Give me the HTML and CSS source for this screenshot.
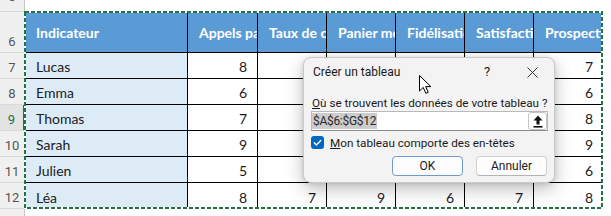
FILE: index.html
```html
<!DOCTYPE html>
<html lang="fr">
<head>
<meta charset="utf-8">
<title>Créer un tableau</title>
<link rel="stylesheet" href="styles.css">
</head>
<body>
<div class="sheet">
  <div class="grid">
    <div class="rh r5"><span>5</span></div>
    <div class="blank"></div><div class="blank"></div><div class="blank"></div><div class="blank"></div><div class="blank"></div><div class="blank"></div><div class="blank"></div>

    <div class="rh"><span>6</span></div>
    <div class="hd">Indicateur</div>
    <div class="hd">Appels par jour</div>
    <div class="hd">Taux de conversion</div>
    <div class="hd">Panier moyen</div>
    <div class="hd">Fidélisation</div>
    <div class="hd">Satisfaction</div>
    <div class="hd last">Prospection</div>

    <div class="rh"><span>7</span></div>
    <div class="nm">Lucas</div><div class="num">8</div><div class="num"></div><div class="num"></div><div class="num"></div><div class="num"></div><div class="num last">7</div>

    <div class="rh"><span>8</span></div>
    <div class="nm">Emma</div><div class="num">6</div><div class="num"></div><div class="num"></div><div class="num"></div><div class="num"></div><div class="num last">6</div>

    <div class="rh active"><span>9</span></div>
    <div class="nm">Thomas</div><div class="num">7</div><div class="num"></div><div class="num"></div><div class="num"></div><div class="num"></div><div class="num last">8</div>

    <div class="rh"><span>10</span></div>
    <div class="nm">Sarah</div><div class="num">9</div><div class="num"></div><div class="num"></div><div class="num"></div><div class="num"></div><div class="num last">9</div>

    <div class="rh"><span>11</span></div>
    <div class="nm">Julien</div><div class="num">5</div><div class="num"></div><div class="num"></div><div class="num"></div><div class="num"></div><div class="num last">6</div>

    <div class="rh"><span>12</span></div>
    <div class="nm bottom">Léa</div><div class="num bottom">8</div><div class="num bottom">7</div><div class="num bottom">9</div><div class="num bottom">6</div><div class="num bottom">7</div><div class="num bottom last">8</div>

    <div class="rh r13"></div>
    <div class="blank"></div><div class="blank"></div><div class="blank"></div><div class="blank"></div><div class="blank"></div><div class="blank"></div><div class="blank"></div>
  </div>

  <svg class="ants" width="611" height="216" viewBox="0 0 611 216">
    <rect x="25" y="12" width="577" height="196" fill="none" stroke="#ffffff" stroke-width="2"/>
    <rect x="25" y="12" width="577" height="196" fill="none" stroke="#217346" stroke-width="2" stroke-dasharray="4 2"/>
  </svg>

  <div class="dialog">
    <div class="titlebar">
      <span class="title">Créer un tableau</span>
      <span class="help">?</span>
      <span class="close">
        <svg width="11" height="11" viewBox="0 0 11 11"><path d="M0.5 0.5 L10.5 10.5 M10.5 0.5 L0.5 10.5" stroke="#333" stroke-width="1" fill="none"/></svg>
      </span>
    </div>
    <div class="label"><u>O</u>ù se trouvent les données de votre tableau ?</div>
    <div class="input">
      <span class="sel">$A$6:$G$12</span>
      <span class="collapse">
        <svg width="10" height="13" viewBox="0 0 10 13"><path d="M5 0.5 L9.5 5.5 L6.5 5.5 L6.5 9.5 L3.5 9.5 L3.5 5.5 L0.5 5.5 Z" fill="#111"/><rect x="0.5" y="11" width="9" height="1.6" fill="#111"/></svg>
      </span>
    </div>
    <div class="check">
      <span class="box">
        <svg width="13" height="13" viewBox="0 0 13 13"><path d="M3.2 6.8 L5.4 9 L9.8 4.4" stroke="#fff" stroke-width="1.4" fill="none" stroke-linecap="round" stroke-linejoin="round"/></svg>
      </span>
      <span class="checklabel"><u>M</u>on tableau comporte des en-têtes</span>
    </div>
    <div class="buttons">
      <span class="btn ok">OK</span>
      <span class="btn">Annuler</span>
    </div>
  </div>

  <svg class="cursor" width="14" height="20" viewBox="0 0 14 20">
    <path d="M0.5 0.5 L0.5 16 L4.2 12.4 L6.8 18.3 L9.2 17.3 L6.7 11.6 L11.8 11.6 Z" fill="#fff" stroke="#000" stroke-width="1" stroke-linejoin="round"/>
  </svg>
</div>
</body>
</html>
```

FILE: styles.css
```css
html, body {
  margin: 0;
  padding: 0;
  background: #ffffff;
}

.sheet {
  position: relative;
  width: 611px;
  height: 216px;
  overflow: hidden;
}

.grid {
  display: grid;
  grid-template-columns: 25px 163px 70px 69px 69px 69px 69px 77px;
  grid-template-rows: 12px 41px repeat(6, 26px) 7px;
  font-family: Lato, "Liberation Sans", sans-serif;
  font-size: 14px;
  color: #1b1b1b;
}

.grid > div {
  box-sizing: border-box;
  min-width: 0;
  overflow: hidden;
  white-space: nowrap;
}

.rh {
  background: #f0f0f0;
  border-right: 1px solid #c6c6c6;
  border-bottom: 1px solid #dadada;
  display: flex;
  align-items: flex-end;
  justify-content: center;
  font-family: Roboto, "Noto Sans", sans-serif;
  font-size: 13px;
  line-height: 13px;
  color: #555;
  padding-bottom: 4px;
}

.rh.r5 {
  padding-bottom: 8px;
  align-items: flex-end;
}

.rh.r13 {
  border-bottom: none;
}

.rh.active {
  color: #217346;
  background: #e3e3e3;
  border-right: 2px solid #217346;
}

.blank {
  background: #ffffff;
}

.hd {
  background: #5b9bd5;
  color: #ffffff;
  font-weight: 700;
  display: flex;
  align-items: center;
  padding-left: 11px;
  border-right: 1px solid #000;
  border-bottom: 1px solid #000;
}

.nm {
  background: #ddebf7;
  display: flex;
  align-items: flex-end;
  padding-left: 11px;
  padding-bottom: 3px;
  line-height: 16px;
  border-right: 1px solid #000;
  border-bottom: 1px solid #000;
}

.num {
  background: #ffffff;
  display: flex;
  align-items: flex-end;
  justify-content: flex-end;
  padding-right: 10px;
  padding-bottom: 3px;
  line-height: 16px;
  border-right: 1px solid #000;
  border-bottom: 1px solid #000;
}

.grid > .last {
  border-right: none;
  margin-right: 8px;
}

.grid > .bottom {
  border-bottom: none;
}

.ants {
  position: absolute;
  left: 0;
  top: 0;
  pointer-events: none;
}

.dialog {
  position: absolute;
  left: 303px;
  top: 57px;
  width: 252px;
  height: 126px;
  box-sizing: border-box;
  border: 1px solid #c9c9c9;
  border-radius: 8px;
  background: #f3f3f3;
  box-shadow: 0 6px 18px rgba(0, 0, 0, 0.26), 0 1px 4px rgba(0, 0, 0, 0.12);
  padding: 0 6px 0 7px;
  display: flex;
  flex-direction: column;
  font-family: Roboto, "Noto Sans", sans-serif;
  font-size: 12px;
  color: #1a1a1a;
}

.titlebar {
  height: 37px;
  box-sizing: border-box;
  padding-top: 6px;
  display: flex;
  align-items: flex-start;
  line-height: 16px;
}

.title {
  flex: 1;
  margin-left: 2px;
}

.help {
  width: 20px;
  text-align: center;
  font-size: 13px;
}

.close {
  width: 20px;
  height: 16px;
  margin-left: 25px;
  margin-right: 6px;
  display: flex;
  align-items: center;
  justify-content: center;
}

.label {
  height: 16px;
  line-height: 16px;
  margin-left: 1px;
  white-space: nowrap;
  font-size: 11.7px;
}

.input {
  height: 20px;
  box-sizing: border-box;
  border: 1px solid #b9b9b9;
  border-bottom-color: #8a8a8a;
  background: #ffffff;
  display: flex;
  align-items: center;
}

.sel {
  background: #cccccc;
  color: #2a2a2a;
  line-height: 16px;
  padding: 0 1px;
  letter-spacing: -0.3px;
}

.collapse {
  margin-left: auto;
  width: 19px;
  height: 18px;
  box-sizing: border-box;
  border: 1px solid #c4c4c4;
  border-radius: 3px;
  background: #ffffff;
  display: flex;
  align-items: center;
  justify-content: center;
}

.check {
  margin-top: 5px;
  height: 13px;
  display: flex;
  align-items: center;
}

.box {
  width: 13px;
  height: 13px;
  border-radius: 3px;
  background: #0067c0;
  display: flex;
}

.checklabel {
  margin-left: 6px;
  line-height: 16px;
  white-space: nowrap;
  font-size: 11.7px;
}

.buttons {
  margin-top: 7px;
  height: 20px;
  display: flex;
  justify-content: flex-end;
  gap: 13px;
  margin-right: 1px;
}

.btn {
  width: 71px;
  height: 20px;
  box-sizing: border-box;
  border: 1px solid #d0d0d0;
  border-bottom-color: #b4b4b4;
  border-radius: 4px;
  background: #fdfdfd;
  display: flex;
  align-items: center;
  justify-content: center;
}

.btn.ok {
  border-color: #6e9bd0;
}

.cursor {
  position: absolute;
  left: 419px;
  top: 75px;
  pointer-events: none;
}
```
